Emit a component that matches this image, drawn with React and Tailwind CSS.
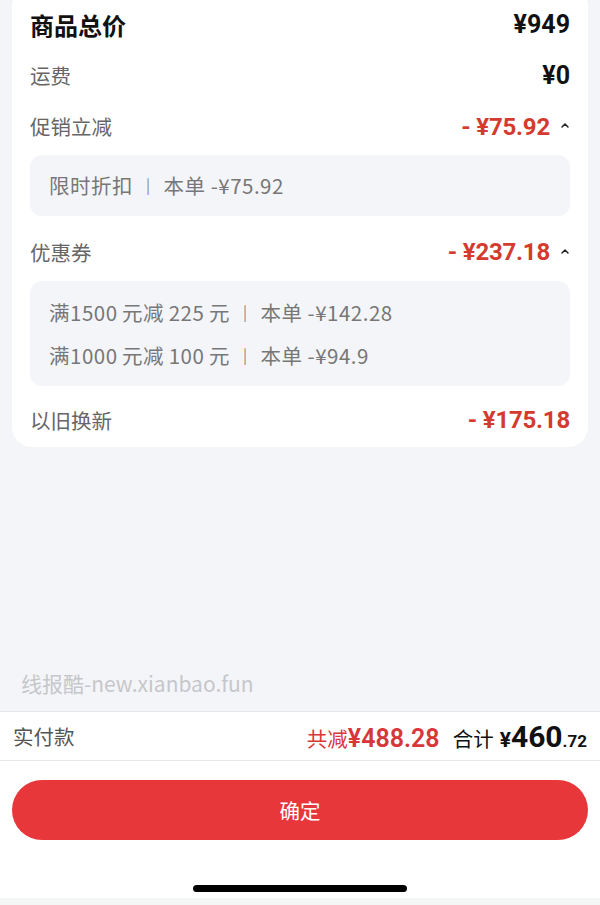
import React from "react";

const cjk = { fontFamily: '"Noto Sans CJK SC", "Noto Sans", sans-serif' };
const num = { fontFamily: 'Roboto, "Noto Sans CJK SC", sans-serif' };

function ChevronUp() {
  return (
    <svg width="10" height="7" viewBox="0 0 10 7" className="ml-[10px] mt-[-2px]">
      <path d="M2 5 L5 2 L8 5" fill="none" stroke="#222" strokeWidth="1.5" strokeLinecap="round" strokeLinejoin="round" />
    </svg>
  );
}

function Amount({ value, chevron }) {
  return (
    <div className="flex items-center">
      <span className="text-[24px] font-bold text-[#d43b2e] tracking-[-0.2px]" style={num}>
        -&nbsp;¥{value}
      </span>
      {chevron && <ChevronUp />}
    </div>
  );
}

function Detail({ name, amount }) {
  return (
    <div className="flex h-[43px] items-center text-[20.5px] tracking-[0.5px] text-[#777]" style={cjk}>
      <span>{name}</span>
      <span className="mx-[13px] text-[15px] text-[#888]">|</span>
      <span>本单 -¥{amount}</span>
    </div>
  );
}

export default function App() {
  return (
    <div className="flex h-[905px] w-[600px] flex-col bg-[#f4f5f9]" style={cjk}>
      {/* price details card */}
      <div className="mx-[12px] -mt-[14px] rounded-[20px] bg-white px-[18px] pb-[2px] pt-[14px]">
        <div className="flex h-[50px] items-center justify-between">
          <span className="text-[24px] font-bold text-[#111]">商品总价</span>
          <span className="text-[25px] font-bold text-[#111]" style={num}>¥949</span>
        </div>
        <div className="flex h-[51px] items-center justify-between">
          <span className="text-[20.5px] text-[#666]">运费</span>
          <span className="text-[25px] font-bold text-[#111]" style={num}>¥0</span>
        </div>
        <div className="flex h-[51px] items-center justify-between">
          <span className="text-[20.5px] text-[#666]">促销立减</span>
          <Amount value="75.92" chevron />
        </div>
        <div className="mt-[3px] flex h-[61px] items-center rounded-[12px] bg-[#f4f5f9] px-[19px]">
          <Detail name="限时折扣" amount="75.92" />
        </div>
        <div className="mt-[11px] flex h-[50px] items-center justify-between">
          <span className="text-[20.5px] text-[#666]">优惠券</span>
          <Amount value="237.18" chevron />
        </div>
        <div className="mt-[4px] h-[105px] rounded-[12px] bg-[#f4f5f9] px-[19px] pt-[10px]">
          <Detail name={"满1500\u2009元减\u2009225\u2009元"} amount="142.28" />
          <Detail name={"满1000\u2009元减\u2009100\u2009元"} amount="94.9" />
        </div>
        <div className="mt-[9px] flex h-[50px] items-center justify-between">
          <span className="text-[20.5px] text-[#666]">以旧换新</span>
          <Amount value="175.18" />
        </div>
      </div>

      {/* watermark */}
      <div className="flex flex-1 items-end px-[21px] pb-[16px]">
        <span className="text-[21px] leading-[24px] text-[#c6c7cb]">线报酷-new.xianbao.fun</span>
      </div>

      {/* bottom bar */}
      <div className="bg-white">
        <div className="flex h-[50px] items-center justify-between border-y border-[#e6e6e6] pl-[13px] pr-[13px]">
          <span className="text-[20.5px] text-[#555]">实付款</span>
          <div className="flex items-baseline">
            <span className="text-[20.5px] text-[#d9363a]">共减</span>
            <span className="text-[25px] font-semibold text-[#d9363a]" style={num}>¥488.28</span>
            <span className="ml-[13px] text-[20.5px] text-[#111]">合计</span>
            <span className="ml-[6px] text-[21px] font-bold text-[#111]" style={num}>¥</span>
            <span className="text-[30px] font-bold text-[#111]" style={num}>460</span>
            <span className="text-[17px] font-bold text-[#111]" style={num}>.72</span>
          </div>
        </div>
        <div className="px-[12px] pt-[19px]">
          <button className="flex h-[60px] w-full items-center justify-center rounded-full bg-[#e8373a] text-[20.5px] text-white">
            确定
          </button>
        </div>
        <div className="flex justify-center pb-[6px] pt-[45px]">
          <div className="h-[7px] w-[214px] rounded-full bg-black" />
        </div>
      </div>
      <div className="h-[7px] bg-[#f4f5f5]" />
    </div>
  );
}
